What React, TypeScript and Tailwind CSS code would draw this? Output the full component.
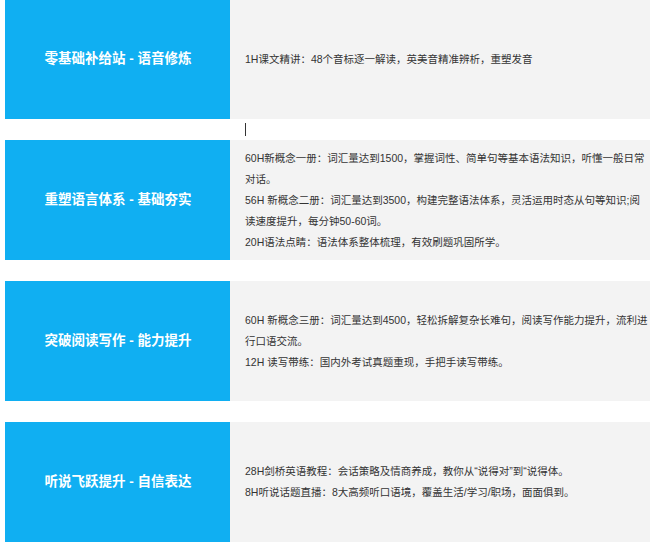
const rows = [
  { title: "零基础补给站 - 语音修炼", lines: ["1H课文精讲：48个音标逐一解读，英美音精准辨析，重塑发音"] },
  { title: "重塑语言体系 - 基础夯实", lines: ["60H新概念一册：词汇量达到1500，掌握词性、简单句等基本语法知识，听懂一般日常对话。", "56H 新概念二册：词汇量达到3500，构建完整语法体系，灵活运用时态从句等知识;阅读速度提升，每分钟50-60词。", "20H语法点睛：语法体系整体梳理，有效刷题巩固所学。"] },
  { title: "突破阅读写作 - 能力提升", lines: ["60H 新概念三册：词汇量达到4500，轻松拆解复杂长难句，阅读写作能力提升，流利进行口语交流。", "12H 读写带练：国内外考试真题重现，手把手读写带练。"] },
  { title: "听说飞跃提升 - 自信表达", lines: ["28H剑桥英语教程：会话策略及情商养成，教你从“说得对”到“说得体。", "8H听说话题直播：8大高频听口语境，覆盖生活/学习/职场，面面俱到。"] },
];

function Row({ title, lines }: { title: string; lines: string[] }) {
  return (
    <div className="flex h-[120px] w-[645px]">
      <div className="flex w-[225px] shrink-0 items-center justify-center pl-px bg-[#10aff2] text-[13.5px] font-bold text-white">{title}</div>
      <div className="flex flex-1 flex-col justify-center bg-[#f3f3f3] pl-[15px] text-[10.5px] leading-[21px] text-[#333333]">
        {lines.map((l) => <p key={l}>{l}</p>)}
      </div>
    </div>
  );
}

export default function App() {
  return (
    <div className="h-[546px] w-[660px] overflow-hidden bg-white pl-[5px] font-['Liberation_Sans','Noto_Sans_CJK_SC',sans-serif]">
      <div className="-mt-px flex flex-col">
        <Row {...rows[0]} />
        <div className="flex h-[21px] items-center pl-[240px]"><span className="h-[13px] w-px bg-[#333333]" /></div>
        <Row {...rows[1]} />
        <div className="h-[21px]" />
        <Row {...rows[2]} />
        <div className="h-[21px]" />
        <Row {...rows[3]} />
      </div>
    </div>
  );
}
